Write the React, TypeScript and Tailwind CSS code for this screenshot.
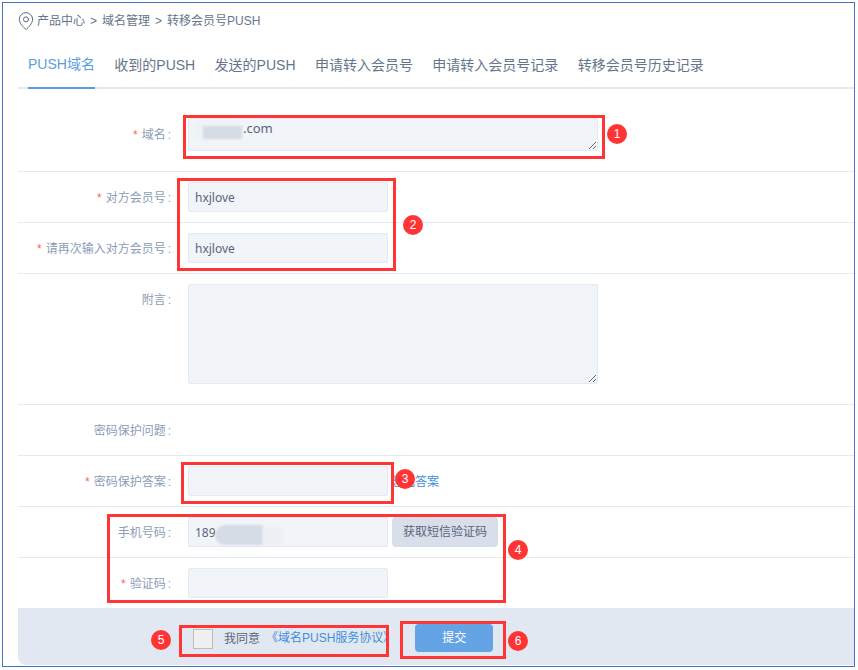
import React from 'react';
import { MapPin } from 'lucide-react';

const tabs = ['PUSH域名', '收到的PUSH', '发送的PUSH', '申请转入会员号', '申请转入会员号记录', '转移会员号历史记录'];

const Label = ({ text, required }: { text: string; required?: boolean }) => (
  <div className="w-[153px] shrink-0 pt-[2px] text-right text-[12px] leading-[18px] text-[#8c9db5]">
    {required && <span className="mr-[4px] text-[#f9684f]">*</span>}
    {text}
    <span className="ml-[2px]">:</span>
  </div>
);

const Input = ({ value }: { value?: string }) => (
  <input
    readOnly
    defaultValue={value}
    className="h-[30px] w-[200px] rounded-[2px] border border-[#e4e9f2] bg-[#f1f4f9] px-[6px] font-['Noto_Sans','Noto_Sans_CJK_SC',sans-serif] text-[12px] text-[#59667a] outline-none"
  />
);

const Row = ({ children, last }: { children: React.ReactNode; last?: boolean }) => (
  <div className={`flex items-center ${last ? 'h-[50px]' : 'h-[51px] border-b border-[#e4e9f2]'}`}>{children}</div>
);

const RedBox = ({ className }: { className: string }) => (
  <div className={`pointer-events-none absolute border-[3px] border-[#ff3535] ${className}`} />
);

const Badge = ({ n, className }: { n: number; className: string }) => (
  <div className={`absolute flex h-[20px] w-[20px] items-center justify-center rounded-full bg-[#ff3535] text-[12px] text-white ${className}`}>
    {n}
  </div>
);

export default function App() {
  return (
    <div className="relative h-[670px] w-[858px] bg-white font-['Liberation_Sans','Noto_Sans_CJK_SC',sans-serif]">
      <div className="ml-[2px] mt-[2px] flex h-[665px] w-[853px] flex-col border border-[#4472c4] pl-[15px]">
        {/* breadcrumb */}
        <div className="flex h-[35px] items-center text-[12px] text-[#66758c]">
          <MapPin size={20} strokeWidth={1.2} className="-ml-[2px] mr-[1px] text-[#5a6a80]" />
          <span>产品中心</span>
          <span className="mx-[5px]">&gt;</span>
          <span>域名管理</span>
          <span className="mx-[5px]">&gt;</span>
          <span>转移会员号PUSH</span>
        </div>

        {/* tabs */}
        <div className="flex h-[51px] gap-[19.4px] border-b-2 border-[#e4e9f2] pl-[10px]">
          {tabs.map((t, i) => (
            <div
              key={t}
              className={`-mb-[2px] flex h-[51px] items-center pt-[3px] text-[14px] ${
                i === 0 ? 'border-b-2 border-[#5b9ede] text-[#5b9ede]' : 'text-[#66758c]'
              }`}
            >
              {t}
            </div>
          ))}
        </div>

        {/* form */}
        <div className="flex h-[83px] items-start border-b border-[#e4e9f2] pt-[29px]">
          <div className="pt-[6px]">
            <Label text="域名" required />
          </div>
          <textarea
            readOnly
            defaultValue=".com"
            className="ml-[17px] h-[33px] w-[410px] rounded-[2px] border border-[#e4e9f2] bg-[#f1f4f9] pl-[54px] font-['Noto_Sans',sans-serif] text-[13px] leading-[18px] text-[#59667a] outline-none"
          />
        </div>
        <Row>
          <Label text="对方会员号" required />
          <div className="ml-[17px]"><Input value="hxjlove" /></div>
        </Row>
        <Row>
          <Label text="请再次输入对方会员号" required />
          <div className="ml-[17px]"><Input value="hxjlove" /></div>
        </Row>
        <div className="flex h-[131px] items-start border-b border-[#e4e9f2] pt-[10px]">
          <div className="pt-[5px]">
            <Label text="附言" />
          </div>
          <textarea
            readOnly
            className="ml-[17px] h-[100px] w-[410px] rounded-[2px] border border-[#e4e9f2] bg-[#f1f4f9] outline-none"
          />
        </div>
        <Row>
          <Label text="密码保护问题" />
        </Row>
        <Row>
          <Label text="密码保护答案" required />
          <div className="ml-[17px]"><Input /></div>
          <a className="ml-[3px] pt-[2px] text-[12px] text-[#3f8fd9]">忘记答案</a>
        </Row>
        <Row>
          <Label text="手机号码" />
          <div className="ml-[17px]"><Input value="189" /></div>
          <button className="ml-[4px] h-[30px] w-[106px] rounded-[4px] bg-[#d8dfeb] text-[12px] text-[#59667a]">
            获取短信验证码
          </button>
        </Row>
        <Row last>
          <Label text="验证码" required />
          <div className="ml-[17px]"><Input /></div>
        </Row>

        {/* footer */}
        <div className="flex h-[57px] items-center rounded-bl-[8px] bg-[#e2e8f2] pl-[175px] pt-[3px]">
          <div className="mt-[1px] h-[20px] w-[20px] border border-[#bdbdbd] bg-[#f0f0f0]" />
          <span className="ml-[11px] mt-[2px] text-[12px] text-[#59667a]">我同意</span>
          <a className="ml-[6px] text-[12px] text-[#3f8fd9]">《域名PUSH服务协议》</a>
          <button className="ml-[20px] h-[28px] w-[78px] rounded-[4px] bg-[#64a3e4] text-[12px] text-white">提交</button>
        </div>
      </div>

      {/* blurred-out parts of the domain and phone number */}
      <div className="absolute left-[193px] top-[118px] h-[19px] w-[49px] rounded-full bg-[#eef1f6] blur-[1px]" />
      <div className="absolute left-[203px] top-[124px] h-[13px] w-[39px] bg-[#d6dce5] blur-[1px]" />
      <div className="absolute left-[215px] top-[523px] h-[20px] w-[48px] rounded-l-[10px] bg-[#d5dce5] blur-[1px]" />
      <div className="absolute left-[263px] top-[525px] h-[18px] w-[20px] bg-[#edf0f5] blur-[1px]" />

      {/* annotations */}
      <RedBox className="left-[183px] top-[113px] h-[44px] w-[422px]" />
      <RedBox className="left-[177px] top-[176px] h-[93px] w-[219px]" />
      <RedBox className="left-[181px] top-[460px] h-[42px] w-[213px]" />
      <RedBox className="left-[107px] top-[512px] h-[89px] w-[399px]" />
      <RedBox className="left-[179px] top-[623px] h-[32px] w-[210px]" />
      <RedBox className="left-[400px] top-[619px] h-[38px] w-[106px]" />
      <Badge n={1} className="left-[607px] top-[122px]" />
      <Badge n={2} className="left-[403px] top-[213px]" />
      <Badge n={3} className="left-[395px] top-[467px]" />
      <Badge n={4} className="left-[508px] top-[538px]" />
      <Badge n={5} className="left-[151px] top-[628px]" />
      <Badge n={6} className="left-[508px] top-[629px]" />
    </div>
  );
}
